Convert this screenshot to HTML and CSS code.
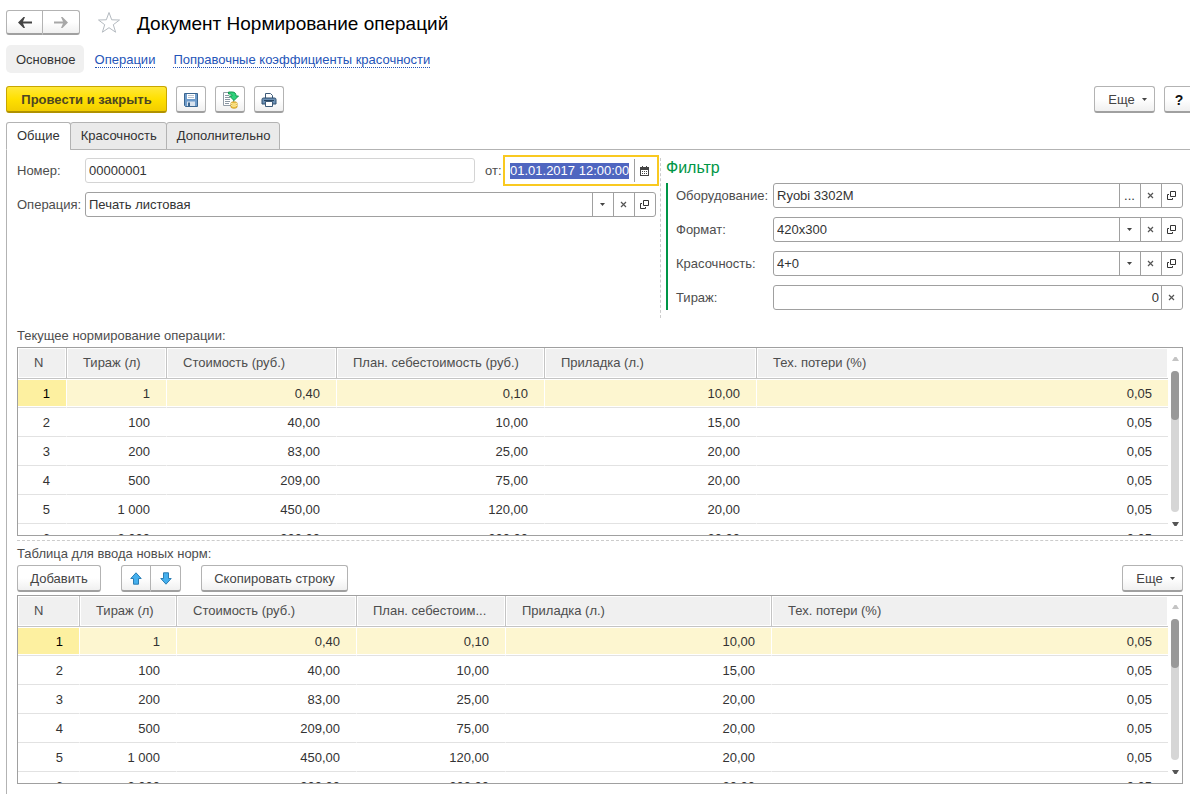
FILE: index.html
```html
<!DOCTYPE html>
<html lang="ru">
<head>
<meta charset="utf-8">
<title>Документ Нормирование операций</title>
<link rel="stylesheet" href="styles.css">
</head>
<body>
<svg class="sprite" aria-hidden="true">
  <symbol id="i-open" viewBox="0 0 9 9"><path d="M3.500 .5h5v5h-5zM2 3.500H.5v5h5V7" fill="none" stroke="#333" /></symbol>
  <symbol id="i-clear" viewBox="0 0 7 7"><path d="M1 1l5 5M6 1L1 6" fill="none" stroke="#555" stroke-width="1.200"/></symbol>
  <symbol id="i-down" viewBox="0 0 5 3"><path d="M0 0h5L2.500 3z" fill="#444"/></symbol>
  <symbol id="i-tri-up" viewBox="0 0 7 4"><path d="M0 4h7L4.500 0h-2z" fill="#c4c4c4"/></symbol>
  <symbol id="i-tri-down" viewBox="0 0 7 4"><path d="M0 0h7L4.500 4h-2z" fill="#555"/></symbol>
</svg>
<div class="page">
  <header class="head">
    <div class="pair">
      <button class="btn nav" aria-label="Назад"><svg width="14" height="11" viewBox="0 0 14 11"><path d="M0 5.500L5.500 0h1.500L5 4.500h9v2H5L7 11H5.500z" fill="#444"/></svg></button>
      <button class="btn nav" aria-label="Вперед"><svg width="14" height="11" viewBox="0 0 14 11"><path d="M14 5.500L8.500 0H7l2 4.500H0v2h9L7 11h1.500z" fill="#a8a8a8"/></svg></button>
    </div>
    <button class="star" aria-label="В избранное"><svg width="24" height="23" viewBox="0 0 24 23"><path d="M12 1.500l2.700 7.300 7.800.2-6.200 4.700 2.300 7.500L12 16.700l-6.600 4.500 2.300-7.500L1.500 9l7.800-.2z" fill="#fff" stroke="#b4bac0"/></svg></button>
    <h1>Документ Нормирование операций</h1>
  </header>
  <nav class="links">
    <span class="current">Основное</span>
    <a href="#operations">Операции</a>
    <a href="#factors">Поправочные коэффициенты красочности</a>
  </nav>
  <div class="toolbar">
    <button class="btn primary">Провести и закрыть</button>
    <button class="btn icon" aria-label="Записать"><svg width="16" height="16" viewBox="0 0 16 16"><path d="M1.500 1.500h13v13h-12l-1-1z" fill="#6f9ccb" stroke="#3a658f"/><path d="M4 2h8v5H4z" fill="#fff"/><path d="M5 3.500h6M5 5.500h6" stroke="#b9c4d0"/><path d="M4 9.500h8V14H4z" fill="#d9e3ee"/><path d="M5 10.500h2V14H5z" fill="#3a658f"/></svg></button>
    <button class="btn icon" aria-label="Провести"><svg width="17" height="18" viewBox="0 0 17 18"><path d="M1.500 1.500h10v13h-10z" fill="#fff" stroke="#929ca6"/><path d="M3 4.500h4M3 6.500h5M3 8.500h5M3 10.500h5M3 12.500h4" stroke="#8b97a3"/><path d="M6.500 1h3.500c3 0 4 1.500 4 4h2.500L12 9.500 7.500 5H10c0-1.500-.5-2-3.500-2z" fill="#2fd27b" stroke="#159a51"/><path d="M9 12c0-1.500 6-1.500 6 0v4c0 1.500-6 1.500-6 0z" fill="#f2c94a" stroke="#cf9d22"/><path d="M9 12c1 1.500 5 1.500 6 0M9 14c1 1.500 5 1.500 6 0" fill="none" stroke="#fff2b5"/></svg></button>
    <button class="btn icon" aria-label="Печать"><svg width="16" height="16" viewBox="0 0 16 16"><path d="M4.500 7V1.500h5l2 2V7" fill="#fff" stroke="#3d5a78"/><path d="M2.500 6h11q1.500 0 1.500 1.500V12H1V7.500Q1 6 2.500 6z" fill="#6d91b5" stroke="#2e4e6e"/><path d="M3 8.500h10" stroke="#24425f"/><path d="M4.500 9.500h7v5h-7z" fill="#fff" stroke="#3d5a78"/></svg></button>
    <span class="spring"></span>
    <button class="btn more">Еще<svg width="5" height="3"><use href="#i-down"/></svg></button>
    <button class="btn help">?</button>
  </div>
  <div class="tabs" role="tablist">
    <button class="tab active" role="tab" aria-selected="true">Общие</button>
    <button class="tab" role="tab">Красочность</button>
    <button class="tab" role="tab">Дополнительно</button>
  </div>
  <main class="panel">
    <div class="form">
      <section class="main-fields">
        <div class="row">
          <label for="num">Номер:</label>
          <div class="field quiet"><input id="num" value="00000001"></div>
          <label class="from" for="date">от:</label>
          <div class="field date"><input id="date" value="01.01.2017 12:00:00"><button aria-label="Календарь"><svg width="9" height="10" viewBox="0 0 9 10"><path d="M0 1h9v9H0zM2 0h1v2H2zM6 0h1v2H6z" fill="#444"/><path d="M1 4h7v5H1z" fill="#fff"/><path d="M2 5.500h5M2 7.500h5" stroke="#444" stroke-dasharray="1"/></svg></button></div>
        </div>
        <div class="row">
          <label for="op">Операция:</label>
          <div class="field"><input id="op" value="Печать листовая"><button aria-label="Выбрать"><svg width="5" height="3"><use href="#i-down"/></svg></button><button aria-label="Очистить"><svg width="7" height="7"><use href="#i-clear"/></svg></button><button aria-label="Открыть"><svg width="9" height="9"><use href="#i-open"/></svg></button></div>
        </div>
      </section>
      <section class="filter">
        <h2>Фильтр</h2>
        <div class="filter-rows">
          <div class="row">
            <label for="eq">Оборудование:</label>
            <div class="field"><input id="eq" value="Ryobi 3302M"><button aria-label="Выбрать">...</button><button aria-label="Очистить"><svg width="7" height="7"><use href="#i-clear"/></svg></button><button aria-label="Открыть"><svg width="9" height="9"><use href="#i-open"/></svg></button></div>
          </div>
          <div class="row">
            <label for="fmt">Формат:</label>
            <div class="field"><input id="fmt" value="420x300"><button aria-label="Выбрать"><svg width="5" height="3"><use href="#i-down"/></svg></button><button aria-label="Очистить"><svg width="7" height="7"><use href="#i-clear"/></svg></button><button aria-label="Открыть"><svg width="9" height="9"><use href="#i-open"/></svg></button></div>
          </div>
          <div class="row">
            <label for="col">Красочность:</label>
            <div class="field"><input id="col" value="4+0"><button aria-label="Выбрать"><svg width="5" height="3"><use href="#i-down"/></svg></button><button aria-label="Очистить"><svg width="7" height="7"><use href="#i-clear"/></svg></button><button aria-label="Открыть"><svg width="9" height="9"><use href="#i-open"/></svg></button></div>
          </div>
          <div class="row">
            <label for="run">Тираж:</label>
            <div class="field"><input id="run" class="num" value="0"><button aria-label="Очистить"><svg width="7" height="7"><use href="#i-clear"/></svg></button></div>
          </div>
        </div>
      </section>
    </div>
    <p class="caption first">Текущее нормирование операции:</p>
    <div class="grid">
      <div class="view">
        <table>
          <colgroup><col class="a1"><col class="a2"><col class="a3"><col class="a4"><col class="a5"><col></colgroup>
          <thead><tr><th>N</th><th>Тираж (л)</th><th>Стоимость (руб.)</th><th>План. себестоимость (руб.)</th><th>Приладка (л.)</th><th>Тех. потери (%)</th></tr></thead>
          <tbody>
            <tr class="sel"><td>1</td><td>1</td><td>0,40</td><td>0,10</td><td>10,00</td><td>0,05</td></tr>
            <tr><td>2</td><td>100</td><td>40,00</td><td>10,00</td><td>15,00</td><td>0,05</td></tr>
            <tr><td>3</td><td>200</td><td>83,00</td><td>25,00</td><td>20,00</td><td>0,05</td></tr>
            <tr><td>4</td><td>500</td><td>209,00</td><td>75,00</td><td>20,00</td><td>0,05</td></tr>
            <tr><td>5</td><td>1 000</td><td>450,00</td><td>120,00</td><td>20,00</td><td>0,05</td></tr>
            <tr><td>6</td><td>2 000</td><td>900,00</td><td>200,00</td><td>20,00</td><td>0,05</td></tr>
          </tbody>
        </table>
      </div>
      <div class="scroll"><svg width="7" height="4"><use href="#i-tri-up"/></svg><div class="track"><div class="thumb"></div></div><svg width="7" height="4"><use href="#i-tri-down"/></svg></div>
    </div>
    <div class="splitter"></div>
    <p class="caption">Таблица для ввода новых норм:</p>
    <div class="commands">
      <button class="btn add">Добавить</button>
      <div class="pair">
        <button class="btn move" aria-label="Вверх"><svg width="12" height="13" viewBox="0 0 12 13"><path d="M6 .8l5.200 5.700H8.500v5.700h-5V6.500H.8z" fill="#45b0ee" stroke="#2b7db3"/></svg></button>
        <button class="btn move" aria-label="Вниз"><svg width="12" height="13" viewBox="0 0 12 13"><path d="M6 12.200l5.200-5.700H8.500V.8h-5v5.700H.8z" fill="#45b0ee" stroke="#2b7db3"/></svg></button>
      </div>
      <button class="btn copy">Скопировать строку</button>
      <span class="spring"></span>
      <button class="btn more">Еще<svg width="5" height="3"><use href="#i-down"/></svg></button>
    </div>
    <div class="grid">
      <div class="view">
        <table>
          <colgroup><col class="b1"><col class="b2"><col class="b3"><col class="b4"><col class="b5"><col></colgroup>
          <thead><tr><th>N</th><th>Тираж (л)</th><th>Стоимость (руб.)</th><th>План. себестоим...</th><th>Приладка (л.)</th><th>Тех. потери (%)</th></tr></thead>
          <tbody>
            <tr class="sel"><td>1</td><td>1</td><td>0,40</td><td>0,10</td><td>10,00</td><td>0,05</td></tr>
            <tr><td>2</td><td>100</td><td>40,00</td><td>10,00</td><td>15,00</td><td>0,05</td></tr>
            <tr><td>3</td><td>200</td><td>83,00</td><td>25,00</td><td>20,00</td><td>0,05</td></tr>
            <tr><td>4</td><td>500</td><td>209,00</td><td>75,00</td><td>20,00</td><td>0,05</td></tr>
            <tr><td>5</td><td>1 000</td><td>450,00</td><td>120,00</td><td>20,00</td><td>0,05</td></tr>
            <tr><td>6</td><td>2 000</td><td>900,00</td><td>200,00</td><td>20,00</td><td>0,05</td></tr>
          </tbody>
        </table>
      </div>
      <div class="scroll"><svg width="7" height="4"><use href="#i-tri-up"/></svg><div class="track"><div class="thumb"></div></div><svg width="7" height="4"><use href="#i-tri-down"/></svg></div>
    </div>
  </main>
</div>
<script src="script.js"></script>
</body>
</html>
```
FILE: styles.css
```css
* { box-sizing: border-box; }

body {
  margin: 0;
  background: #fff;
  color: #333;
  font: 13px/16px "Liberation Sans", Arial, sans-serif;
}

button, input { font: inherit; color: inherit; }
button { padding: 0; margin: 0; }
svg { display: block; flex: none; }
h1, h2, p { margin: 0; font-weight: normal; }
.sprite { position: absolute; width: 0; height: 0; }
.spring { flex: 1; }

.page {
  display: flex;
  flex-direction: column;
  height: 100vh;
  min-height: 640px;
  padding: 10px 0 0 6px;
  overflow: hidden;
}

/* Buttons */
.btn {
  display: flex;
  align-items: center;
  justify-content: center;
  height: 27px;
  padding-top: 1px;
  border: 1px solid #b3b3b3;
  border-bottom: 2px solid #a0a0a0;
  border-radius: 3px;
  background: linear-gradient(#fff 50%, #f0f0f0);
  color: #444;
}
.pair { display: flex; }
.pair .btn:first-child { border-radius: 3px 0 0 3px; }
.pair .btn:last-child { border-radius: 0 3px 3px 0; border-left: 0; }
.nav { width: 37px; height: 25px; }
.primary {
  width: 161px;
  border-color: #c8a600;
  border-bottom-color: #b09200;
  background: linear-gradient(#ffe83a, #ffe000 50%, #f2cd00);
  color: #4d4623;
  font-weight: bold;
}
.icon { width: 30px; }
.more { width: 61px; gap: 7px; padding-left: 6px; }
.help { width: 30px; color: #111; font-size: 14px; font-weight: bold; }
.move { width: 30px; }
.add { width: 84px; }
.copy { width: 147px; }

/* Header */
.head { display: flex; align-items: center; height: 25px; }
.star { margin: 0 16px 0 17px; border: 0; background: none; }
h1 { padding-top: 2px; color: #000; font-size: 19px; line-height: 24px; }

.links { display: flex; align-items: center; gap: 18px; margin-top: 10px; }
.current {
  margin-right: -7px;
  padding: 7px 8px 5px 10px;
  border-radius: 5px;
  background: #f0f0f0;
}
.links a {
  margin-top: 2px;
  border-bottom: 1px dotted #2454b8;
  color: #2454b8;
  line-height: 14px;
  text-decoration: none;
}

.toolbar { display: flex; gap: 9px; margin: 13px -4px 0 0; }

/* Tabs */
.tabs { position: relative; display: flex; margin-top: 9px; }
.tab {
  height: 28px;
  margin-left: -1px;
  padding: 0 9px 0 10px;
  border: 1px solid #b3b3b3;
  border-radius: 3px 3px 0 0;
  background: #eaeaea;
}
.tab.active {
  margin-left: 0;
  padding-right: 10px;
  border-bottom-color: #fff;
  background: #fff;
}

.panel {
  display: flex;
  flex: 1;
  flex-direction: column;
  min-height: 0;
  margin-top: -1px;
  padding: 8px 7px 10px 10px;
  border: solid #b3b3b3;
  border-width: 1px 0 0 1px;
}

/* Form */
.form { display: grid; grid-template-columns: minmax(0, 644fr) minmax(0, 522fr); }
.main-fields {
  display: flex;
  flex-direction: column;
  gap: 9px;
  padding-right: 4px;
  border-right: 1px dashed #ccc;
}
.row { display: flex; align-items: center; }
label { flex: none; width: 68px; color: #4d4d4d; }
.from { width: 31px; padding-left: 10px; }
.field {
  display: flex;
  flex: 1;
  min-width: 0;
  height: 25px;
  border: 1px solid #a0a0a0;
  border-radius: 3px;
  background: #fff;
}
.field input {
  flex: 1;
  min-width: 0;
  padding: 0 3px;
  border: 0;
  outline: 0;
  background: none;
}
.field button {
  display: flex;
  align-items: center;
  justify-content: center;
  width: 21px;
  padding-right: 1px;
  border: 0;
  border-left: 1px solid #a0a0a0;
  background: none;
}
.field .num { padding-right: 2px; text-align: right; }
.quiet { border-color: #d4d4d4; }
.date {
  flex: none;
  width: 150px;
  border-color: #fff;
  border-radius: 0;
  outline: 2px solid #f9c920;
  outline-offset: 1px;
}
.date input::selection { background: #4f66c0; color: #fff; }

.filter { padding: 0 0 8px 5px; }
h2 { color: #009646; font-size: 16px; line-height: 20px; }
.filter-rows {
  display: flex;
  flex-direction: column;
  gap: 9px;
  margin-top: 5px;
  padding-left: 8px;
  border-left: 2px solid #009646;
}
.filter label { width: 97px; }

.caption { color: #4d4d4d; }
.first { margin-top: 10px; }
.commands { display: flex; margin: 3px 0; }
.commands .pair { margin: 0 20px; }

.splitter { margin: 4px 0 5px; border-top: 1px dashed #ccc; }

/* Data grids */
.grid {
  display: flex;
  flex: 1 1 0;
  min-height: 0;
  border: 1px solid #a0a0a0;
}
.first + .grid { margin-top: 3px; }
.view { flex: 1; min-width: 0; overflow: hidden; }
table {
  width: 100%;
  border-collapse: separate;
  border-spacing: 0;
  table-layout: fixed;
}
th, td { overflow: hidden; text-overflow: ellipsis; white-space: nowrap; }
th {
  height: 31px;
  padding: 0 16px;
  border: solid #c4c4c4;
  border-width: 0 1px 1px 0;
  background: #f0f0f0;
  box-shadow: inset 0 0 0 1px #fff;
  color: #4d4d4d;
  font-weight: normal;
  text-align: left;
}
td {
  height: 29px;
  padding: 1px 16px 0;
  border: solid transparent;
  border-width: 0 1px 1px 0;
  border-bottom-color: #e2e2e2;
  text-align: right;
}
th:last-child, td:last-child { border-right: 0; }
.sel td {
  border-right-color: #fff;
  background: #fdf6d0;
  box-shadow: inset 0 1px #fff, inset 0 -1px #fff;
}
.sel td:first-child { background: #fdf0a0; color: #000; }
.a1 { width: 49px; }
.a2 { width: 100px; }
.a3 { width: 170px; }
.a4 { width: 208px; }
.a5 { width: 212px; }
.b1 { width: 62px; }
.b2 { width: 97px; }
.b3 { width: 180px; }
.b4 { width: 149px; }
.b5 { width: 266px; }

.scroll {
  display: flex;
  flex-direction: column;
  align-items: center;
  justify-content: space-between;
  width: 14px;
  padding: 9px 0;
}
.track {
  flex: 1;
  width: 8px;
  margin: 10px 0;
  border-radius: 4px;
  background: #d6d6d6;
}
.thumb { height: 35%; border-radius: 4px; background: #999; }
```
FILE: script.js
```js
const date = document.getElementById("date");
date.focus();
date.select();
```
